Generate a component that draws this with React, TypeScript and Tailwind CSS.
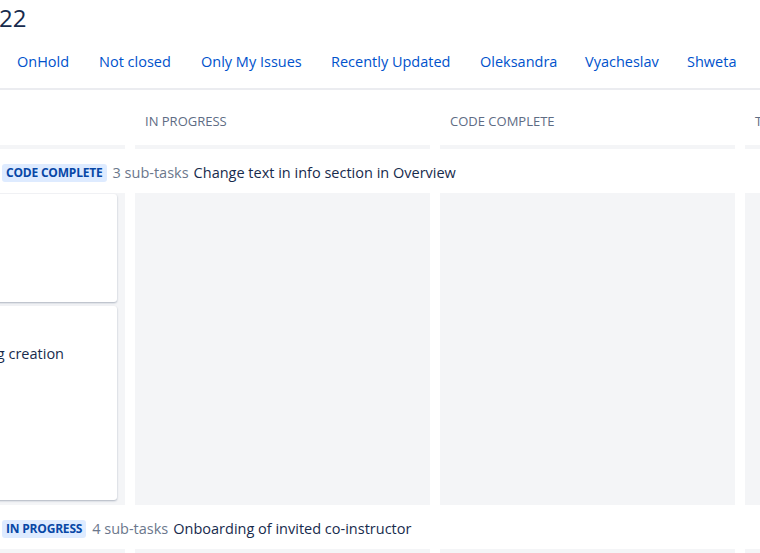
import React from "react";

const filters = [
  { label: "OnHold", w: "w-[82px]" },
  { label: "Not closed", w: "w-[102px]" },
  { label: "Only My Issues", w: "w-[130px]" },
  { label: "Recently Updated", w: "w-[149px]" },
  { label: "Oleksandra", w: "w-[105px]" },
  { label: "Vyacheslav", w: "w-[102px]" },
  { label: "Shweta", w: "w-[80px]" },
];

const columns = ["TO DO", "IN PROGRESS", "CODE COMPLETE", "TESTING"];

function ColumnRow({ className, children }: { className?: string; children?: React.ReactNode[] }) {
  return (
    <div className={"flex gap-[10px] " + (className ?? "")}>
      {columns.map((c, i) => (
        <div key={c} className="w-[295px] shrink-0 bg-[#f4f5f7] h-full">
          {children ? children[i] : null}
        </div>
      ))}
    </div>
  );
}

function Lane({ badge, count, title }: { badge: string; count: string; title: string }) {
  return (
    <div className="h-[44px] flex items-center pl-[172px] bg-white pt-[3px]">
      <span className="bg-[#deebff] text-[#0747a6] text-[12px] font-bold uppercase leading-[18px] px-[4px] rounded-[3px] tracking-[-0.2px]">
        {badge}
      </span>
      <span className="ml-[6px] text-[14.5px] text-[#6b778c]">{count}</span>
      <span className="ml-[5px] text-[14.5px] text-[#172b4d]">{title}</span>
    </div>
  );
}

export default function App() {
  return (
    <div
      className="w-[760px] h-[553px] overflow-hidden bg-white text-[#172b4d]"
      style={{ fontFamily: '"Open Sans", "Noto Sans", sans-serif' }}
    >
      <div className="h-[36px] flex items-center -ml-[1px]">
        <span className="text-[24px] leading-none text-[#172b4d]">22</span>
      </div>
      <div className="h-[52px] flex items-center pl-[17px]">
        {filters.map((f) => (
          <span key={f.label} className={f.w + " shrink-0 text-[14.5px] text-[#0052cc] whitespace-nowrap"}>
            {f.label}
          </span>
        ))}
      </div>
      <div className="h-[2px] bg-[#ebecf0]" />
      <div className="-ml-[170px] w-[1300px]">
        <div className="flex gap-[10px] h-[55px]">
          {columns.map((c) => (
            <div key={c} className="w-[295px] shrink-0 pl-[10px] pt-[22px] text-[13px] font-medium text-[#5e6c84] uppercase">
              {c}
            </div>
          ))}
        </div>
        <ColumnRow className="h-[4px]" />
        <Lane badge="Code Complete" count="3 sub-tasks" title="Change text in info section in Overview" />
        <ColumnRow className="h-[312px]">
          {[
            <div key="a" className="px-[8px] pt-[1px] flex flex-col gap-[4px]">
              <div className="h-[108px] bg-white rounded-[3px] shadow-[0_1px_2px_rgba(9,30,66,0.3)]" />
              <div className="h-[194px] bg-white rounded-[3px] shadow-[0_1px_2px_rgba(9,30,66,0.3)] pt-[37px]">
                <div className="w-[226px] text-right whitespace-nowrap text-[14.5px] text-[#172b4d]">
                  Add validation on tag creation
                </div>
              </div>
            </div>,
            null,
            null,
            null,
          ]}
        </ColumnRow>
        <Lane badge="In Progress" count="4 sub-tasks" title="Onboarding of invited co-instructor" />
        <ColumnRow className="h-[40px]" />
      </div>
    </div>
  );
}
